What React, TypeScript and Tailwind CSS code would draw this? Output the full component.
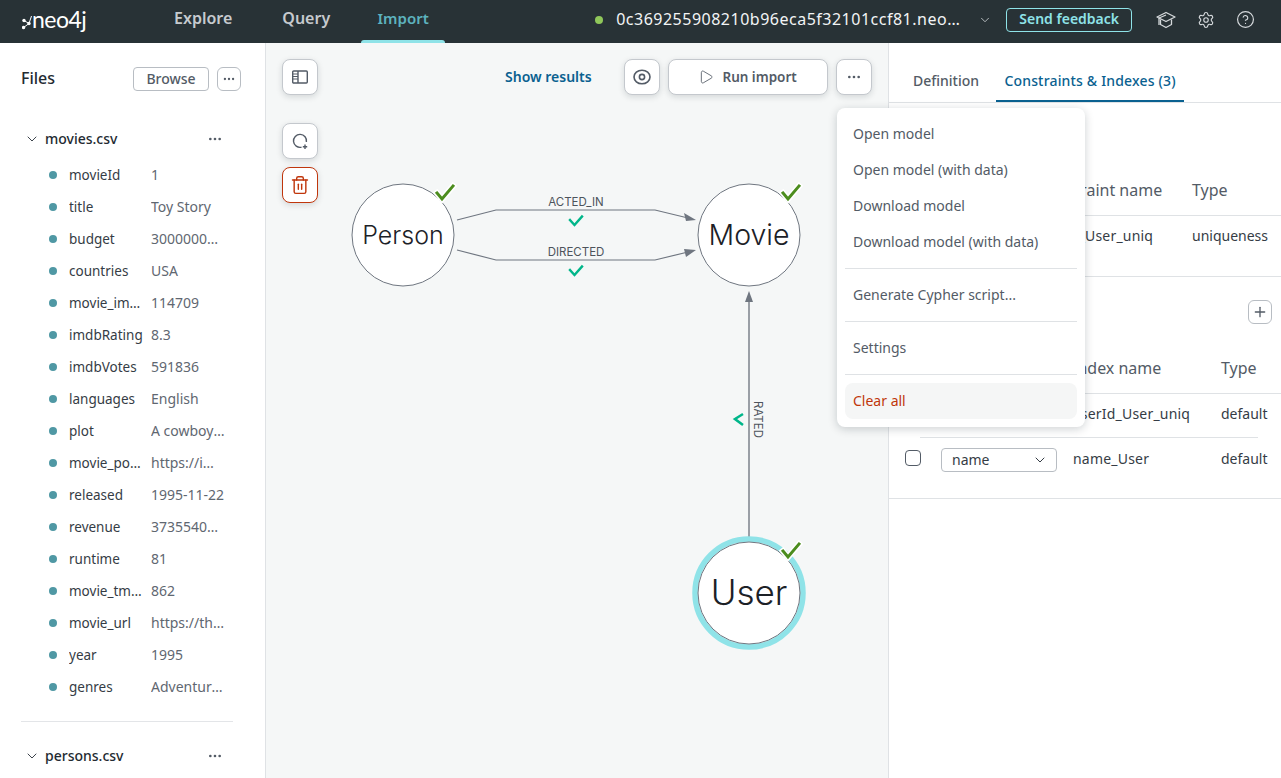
import React from "react";
import { ChevronDown, Ellipsis, Play, Trash2, Settings, CircleHelp, Plus } from "lucide-react";

const movieFields = [
  ["movieId", "1"],
  ["title", "Toy Story"],
  ["budget", "30000000.0"],
  ["countries", "USA"],
  ["movie_imdbId", "114709"],
  ["imdbRating", "8.3"],
  ["imdbVotes", "591836"],
  ["languages", "English"],
  ["plot", "A cowboy doll is"],
  ["movie_poster", "https://image.tmdb"],
  ["released", "1995-11-22"],
  ["revenue", "373554033.0"],
  ["runtime", "81"],
  ["movie_tmdbId", "862"],
  ["movie_url", "https://themoviedb"],
  ["year", "1995"],
  ["genres", "Adventure|Animation"],
];

function CanvasButton({ children, className = "" }: any) {
  return (
    <button className={`flex h-9 w-9 items-center justify-center rounded-lg border border-[#c4c8cd] bg-white text-[#535b66] shadow-[0_2px_6px_rgba(12,26,37,0.14)] ${className}`}>
      {children}
    </button>
  );
}

function FileHeader({ name }: any) {
  return (
    <div className="flex h-6 items-center pl-[3px] pr-[10px]">
      <ChevronDown size={16} strokeWidth={1.5} className="text-[#3d444c]" />
      <span className="-mt-[2px] ml-[5px] flex-1 text-[14px] font-medium text-[#232a31]">{name}</span>
      <Ellipsis size={16} className="text-[#535b66]" />
    </div>
  );
}

function FieldRow({ name, value }: any) {
  return (
    <div className="flex h-8 items-center pl-[28px]">
      <span className="h-2 w-2 shrink-0 rounded-full bg-[#4f98a4]" />
      <span className="ml-3 w-[82px] shrink-0 truncate pr-2 text-[13.5px] text-[#353c45]">{name}</span>
      <span className="-mt-[1px] w-[75px] truncate text-[14px] text-[#5f6771]">{value}</span>
    </div>
  );
}

function TopBar() {
  return (
    <header className="flex h-[43px] shrink-0 bg-[#283236] text-white">
      <div className="flex w-[174px] items-center pb-[4px] pl-[22px]">
        <svg width="10" height="20" viewBox="0 0 10 20">
          <circle cx="2" cy="10.5" r="1.7" fill="#fff" />
          <circle cx="1.6" cy="17.5" r="1.7" fill="#fff" />
          <circle cx="7" cy="13.5" r="1.7" fill="#fff" />
          <path d="M2 10.5L7 13.5L1.6 17.5M7 13.5L9.5 6" stroke="#fff" strokeWidth="1" fill="none" />
        </svg>
        <span className="font-['Lato',sans-serif] text-[23px] leading-none tracking-[-0.5px] text-white">neo4j</span>
      </div>
      <nav className="flex h-full text-[16px] font-semibold">
        <span className="flex items-center pb-[7px] pr-[50px] text-[#c6cace]">Explore</span>
        <span className="flex items-center pb-[7px] pr-[31px] text-[#c6cace]">Query</span>
        <span className="relative flex w-[84px] items-center justify-center pb-[7px] text-[15px] text-[#5db3bf]">
          Import
          <span className="absolute inset-x-0 bottom-0 h-[3px] rounded-t-[3px] bg-[#8fe3e8]" />
        </span>
      </nav>
      <div className="flex h-full items-center pb-[4px]">
        <span className="ml-[150px] h-2 w-2 rounded-full bg-[#8fc75a]" />
        <span className="ml-[13px] w-[346px] truncate pb-[2px] text-[16px] tracking-[0.5px] text-[#f2f4f5]">0c369255908210b96eca5f32101ccf81.neo4jsandbox.com</span>
        <ChevronDown size={14} strokeWidth={1.5} className="ml-[16px] text-[#c6cace]" />
        <button className="ml-[14px] flex h-6 w-[126px] items-center justify-center rounded border border-[#8fe3e8] pb-[2px] text-[14px] font-semibold text-[#8fe3e8]">
          Send feedback
        </button>
        <svg width="20" height="20" viewBox="0 0 20 20" fill="none" stroke="#d5d9dc" strokeWidth="1.3" strokeLinejoin="round" className="ml-[24px]">
          <path d="M10 2.5L19 7L10 11.5L1 7Z" />
          <path d="M4.5 9.5V14.5L10 17.5L15.5 14.5V9.5" />
          <path d="M3 8V15M3 8L10 5" />
        </svg>
        <Settings size={18} strokeWidth={1.5} className="ml-[21px] text-[#d5d9dc]" />
        <CircleHelp size={19} strokeWidth={1.5} className="ml-[21px] text-[#d5d9dc]" />
      </div>
    </header>
  );
}

function FilesPanel() {
  return (
    <aside className="w-[266px] shrink-0 overflow-hidden border-r border-[#dfe2e5] bg-white pt-6">
      <div className="flex h-6 items-center pl-[21px] pr-6">
        <span className="-mt-[2px] flex-1 text-[16px] font-medium text-[#232a31]">Files</span>
        <button className="flex h-6 w-[76px] items-center justify-center rounded border border-[#b8bdc3] pb-[2px] text-[14px] font-medium text-[#535b66]">Browse</button>
        <button className="ml-2 flex h-6 w-6 items-center justify-center rounded-md border border-[#b8bdc3] text-[#535b66]">
          <Ellipsis size={14} />
        </button>
      </div>
      <div className="mt-[36px] pl-[21px] pr-[32px]">
        <FileHeader name="movies.csv" />
        <div className="mt-[8px]">
          {movieFields.map(([n, v]) => (
            <FieldRow key={n} name={n} value={v} />
          ))}
        </div>
        <div className="mt-[18px] border-t border-[#e3e5e8]" />
        <div className="mt-[22px]">
          <FileHeader name="persons.csv" />
        </div>
      </div>
    </aside>
  );
}

function Check({ x, y, color, halo = false }: any) {
  return (
    <g transform={`translate(${x} ${y})`} fill="none" strokeLinecap="square">
      {halo && <path d="M-8 0L-3 6L8 -7" stroke="#fff" strokeWidth="6" />}
      <path d={halo ? "M-8 0L-3 6L8 -7" : "M-6 -1L-1.5 4L6 -4.5"} stroke={color} strokeWidth={halo ? 3 : 2.4} />
    </g>
  );
}

// canvas coords: svg origin sits at the canvas top-left (266, 43)
function GraphCanvas() {
  const font = "Inter, sans-serif";
  return (
    <svg className="absolute inset-0" width="623" height="735" viewBox="266 43 623 735">
      <g fill="none" stroke="#6f7680" strokeWidth="1.2">
        <path d="M457 220L496 210H655L688 218" />
        <path d="M457 250L496 260H655L688 252" />
        <path d="M749 538V300" stroke="#9a9fa6" strokeWidth="2" />
      </g>
      <path d="M696 220L684 213L686 221Z" fill="#6f7680" />
      <path d="M696 250L684 249L686 257Z" fill="#6f7680" />
      <path d="M749 291L745 302H753Z" fill="#6f7680" />
      <text x="576" y="206" textAnchor="middle" fontFamily={font} fontSize="11.5" fill="#4d545c">ACTED_IN</text>
      <text x="576" y="256" textAnchor="middle" fontFamily={font} fontSize="11.5" fill="#4d545c">DIRECTED</text>
      <text x="0" y="0" transform="translate(754 401) rotate(90)" fontFamily={font} fontSize="11.5" fill="#4d545c">RATED</text>
      <Check x={576} y={221} color="#00b68a" />
      <Check x={576} y={271} color="#00b68a" />
      <path d="M743 414L735 419L743 425" fill="none" stroke="#00b68a" strokeWidth="2.6" />
      <circle cx="749" cy="593" r="54" fill="none" stroke="#8fe3e8" strokeWidth="5.5" />
      {[
        [403, 235, "Person", 25, 9],
        [749, 235, "Movie", 28.5, 10],
        [749, 593, "User", 35, 12],
      ].map(([cx, cy, label, size, dy]: any) => (
        <g key={label}>
          <circle cx={cx} cy={cy} r="51" fill="#fff" stroke="#6f7680" strokeWidth="1" />
          <text x={cx} y={cy + dy} textAnchor="middle" fontFamily={font} fontWeight="300" fontSize={size} fill="#1c2127">{label}</text>
        </g>
      ))}
      <Check x={445} y={193} color="#4c8d1e" halo />
      <Check x={791} y={193} color="#4c8d1e" halo />
      <Check x={791} y={551} color="#4c8d1e" halo />
    </svg>
  );
}

function Canvas() {
  return (
    <main className="relative w-[622px] shrink-0 overflow-hidden bg-[#f5f7f7]">
      <GraphCanvas />
      <div className="relative flex items-start pl-4 pt-4">
        <div className="flex flex-col">
          <CanvasButton>
            <svg width="20" height="20" viewBox="0 0 20 20" fill="none" stroke="#535b66" strokeWidth="1.4">
              <rect x="2.7" y="4" width="14.6" height="12" rx="1" />
              <path d="M8 4V16" />
              <path d="M2.7 7H8M2.7 9.5H8M2.7 12H8" strokeWidth="1" />
            </svg>
          </CanvasButton>
          <CanvasButton className="mt-[28px]">
            <svg width="20" height="20" viewBox="0 0 20 20" fill="none" stroke="#535b66" strokeWidth="1.4">
              <path d="M11.5 16.2A6.5 6.5 0 1 1 16.4 11" />
              <path d="M15 13.5V18M12.8 15.7H17.2" />
            </svg>
          </CanvasButton>
          <CanvasButton className="mt-2 border-[#c0360c]">
            <Trash2 size={20} strokeWidth={1.7} className="text-[#c0360c]" />
          </CanvasButton>
        </div>
        <span className="ml-[187px] mt-[7px] text-[14px] font-semibold text-[#0a6190]">Show results</span>
        <CanvasButton className="ml-[32px]">
          <svg width="20" height="20" viewBox="0 0 20 20" fill="none" stroke="#535b66" strokeWidth="1.6">
            <ellipse cx="10" cy="10" rx="8" ry="6.8" />
            <circle cx="10" cy="10" r="2.6" />
          </svg>
        </CanvasButton>
        <button className="ml-2 flex h-9 w-[160px] items-center justify-center rounded-lg border border-[#c4c8cd] bg-white text-[13.5px] font-semibold text-[#535b66] shadow-[0_2px_6px_rgba(12,26,37,0.14)]">
          <Play size={16} strokeWidth={1.3} className="mr-2" />
          Run import
        </button>
        <CanvasButton className="ml-2">
          <Ellipsis size={16} />
        </CanvasButton>
      </div>
    </main>
  );
}

function MenuItem({ children, className = "" }: any) {
  return <div className={`flex h-9 items-center rounded-lg px-2 pb-[2px] text-[14px] text-[#535b66] ${className}`}>{children}</div>;
}

function ActionsMenu() {
  return (
    <div className="absolute left-[837px] top-[108px] z-10 w-[248px] rounded-lg bg-white p-2 shadow-[0_2px_10px_rgba(12,26,37,0.2)]">
      <MenuItem>Open model</MenuItem>
      <MenuItem>Open model (with data)</MenuItem>
      <MenuItem>Download model</MenuItem>
      <MenuItem>Download model (with data)</MenuItem>
      <div className="my-2 border-t border-[#dfe2e5]" />
      <MenuItem>Generate Cypher script...</MenuItem>
      <div className="my-2 border-t border-[#dfe2e5]" />
      <MenuItem>Settings</MenuItem>
      <div className="my-2 border-t border-[#dfe2e5]" />
      <MenuItem className="bg-[#f5f6f6] text-[#c0360c]">Clear all</MenuItem>
    </div>
  );
}

function DetailsPanel() {
  return (
    <aside className="flex-1 overflow-hidden border-l border-[#dfe2e5] bg-white">
      <div className="flex h-[60px] items-end border-b border-[#dfe2e5] pl-2 text-[14px]">
        <span className="flex h-[60px] items-center pl-4 pr-[17px] pt-[16px] font-medium text-[#535b66]">Definition</span>
        <span className="flex h-[60px] w-[188px] items-center justify-center border-b-2 border-[#0a6190] pt-[19px] font-medium tracking-[0.17px] text-[#0a6190]">Constraints &amp; Indexes (3)</span>
      </div>
      <div className="mt-[75px] flex h-[37px] items-start text-[16px] text-[#535b66]">
        <span className="w-[303px] shrink-0 pl-[148px]">Constraint name</span>
        <span>Type</span>
      </div>
      <div className="flex h-[61px] items-center border-t border-[#dfe2e5] pb-[22px] text-[14px] text-[#353c45]">
        <span className="w-[303px] shrink-0 pl-[146px] tracking-[0.2px]">userId_User_uniq</span>
        <span>uniqueness</span>
      </div>
      <div className="border-t border-[#dfe2e5]">
        <div className="flex justify-end pr-[9px] pt-[23px]">
          <button className="flex h-6 w-6 items-center justify-center rounded-md border border-[#b8bdc3] text-[#535b66]">
            <Plus size={16} />
          </button>
        </div>
        <div className="mt-[32px] flex h-[37px] items-start text-[16px] text-[#535b66]">
          <span className="w-[332px] shrink-0 pl-[183px]">Index name</span>
          <span>Type</span>
        </div>
      </div>
      <div className="flex h-[44px] items-center border-t border-[#dfe2e5] pb-[4px] text-[14px] text-[#353c45]">
        <span className="w-[332px] shrink-0 pl-[183px] tracking-[0.2px]">userId_User_uniq</span>
        <span>default</span>
      </div>
      <div className="ml-[31px] mr-[23px] border-t border-[#dfe2e5]" />
      <div className="flex h-[61px] items-start border-b border-[#dfe2e5] pt-[10px] text-[14px] text-[#353c45]">
        <span className="ml-4 mt-[2px] h-4 w-4 shrink-0 rounded border border-[#535b66]" />
        <span className="ml-5 flex h-6 w-[116px] shrink-0 items-center justify-between rounded border border-[#b8bdc3] pb-[2px] pl-[10px] pr-[8px]">
          name
          <ChevronDown size={16} strokeWidth={1.5} className="mt-[2px]" />
        </span>
        <span className="ml-4 w-[148px] shrink-0 tracking-[0.2px]">name_User</span>
        <span>default</span>
      </div>
    </aside>
  );
}

export default function App() {
  return (
    <div className="relative flex h-[778px] flex-col overflow-hidden bg-white font-['Noto_Sans',sans-serif]">
      <TopBar />
      <div className="flex min-h-0 flex-1">
        <FilesPanel />
        <Canvas />
        <DetailsPanel />
      </div>
      <ActionsMenu />
    </div>
  );
}
